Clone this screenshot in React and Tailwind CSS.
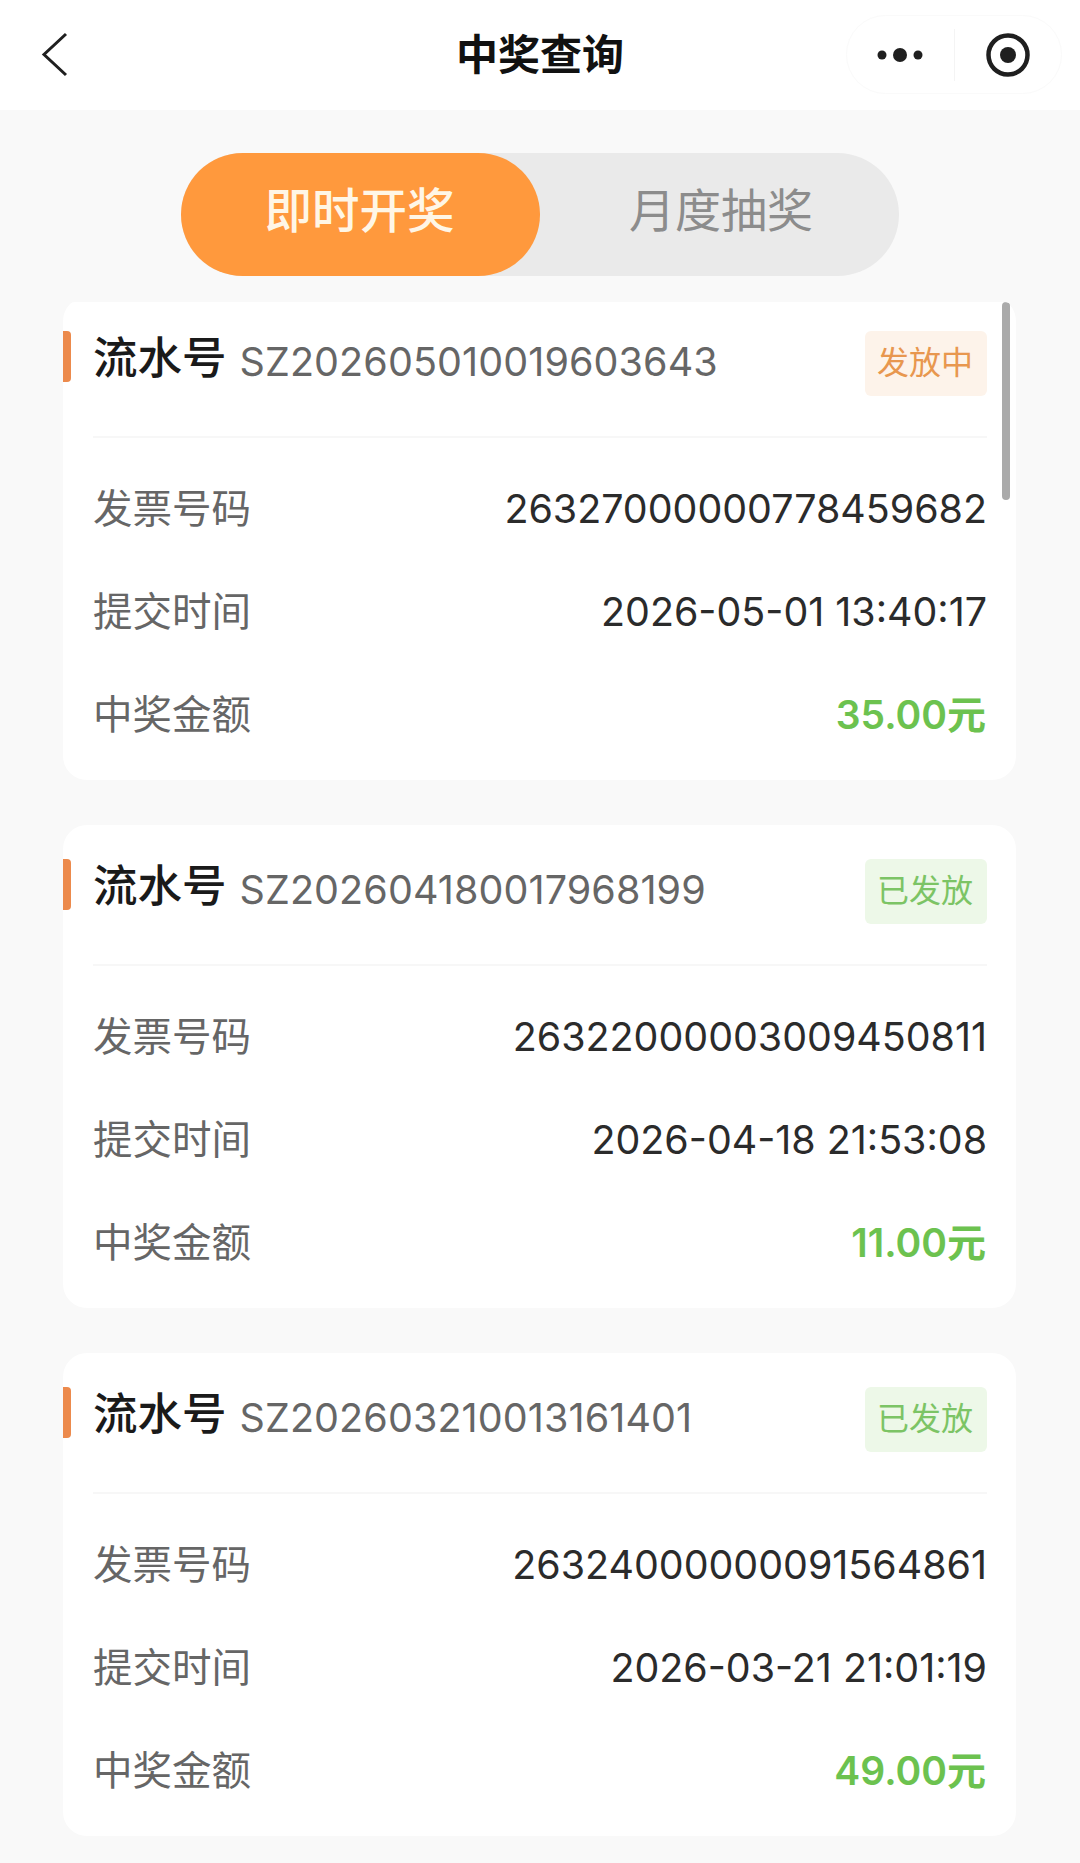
import React from "react";

const fontStack = "font-['Inter','Noto_Sans_CJK_SC',sans-serif]";

const records = [
  {
    serial: "SZ202605010019603643",
    status: "发放中",
    pending: true,
    invoice: "26327000000778459682",
    time: "2026-05-01 13:40:17",
    amount: "35.00元",
  },
  {
    serial: "SZ202604180017968199",
    status: "已发放",
    pending: false,
    invoice: "26322000003009450811",
    time: "2026-04-18 21:53:08",
    amount: "11.00元",
  },
  {
    serial: "SZ202603210013161401",
    status: "已发放",
    pending: false,
    invoice: "26324000000091564861",
    time: "2026-03-21 21:01:19",
    amount: "49.00元",
  },
];

const Row = ({ label, children }) => (
  <div className="flex h-[103px] items-center justify-between">
    <span className="text-[39.5px] leading-none text-[#666666]">{label}</span>
    {children}
  </div>
);

const RecordCard = ({ record }) => (
  <div className="relative h-[483px] rounded-[24px] bg-white pl-[30px] pr-[29px]">
    <div className="absolute left-0 top-[34px] h-[51px] w-[8px] rounded-r-[4px] bg-[#ec8a4c]" />
    <div className="flex h-[123px] items-center justify-between pt-[6px]">
      <div className="flex items-center">
        <span className="mb-[6px] text-[44.5px] font-medium leading-none text-[#1a1a1a]">流水号</span>
        <span className="ml-[13px] mt-[3px] text-[39.5px] leading-none tracking-[0.1px] text-[#666666]">
          {record.serial}
        </span>
      </div>
      <span
        className={
          record.pending
            ? "mt-[3px] flex h-[65px] w-[122px] items-center justify-center rounded-[6px] bg-[#fdf3ea] pr-[2px] text-[32px] text-[#e8974f]"
            : "mt-[3px] flex h-[65px] w-[122px] items-center justify-center rounded-[6px] bg-[#edf8e8] pr-[2px] text-[32px] text-[#7cc465]"
        }
      >
        {record.status}
      </span>
    </div>
    <div className="mt-[16px] h-[2px] bg-[#f7f7f7]" />
    <div className="pt-[20px]">
      <Row label="发票号码">
        <span className="text-[39.4px] leading-none text-[#2b2b2b]">{record.invoice}</span>
      </Row>
      <Row label="提交时间">
        <span className="text-[39.4px] leading-none text-[#2b2b2b]">{record.time}</span>
      </Row>
      <Row label="中奖金额">
        <span className="mb-[2px] mr-[1px] text-[39px] font-semibold leading-none text-[#6cc24f]">{record.amount}</span>
      </Row>
    </div>
  </div>
);

export default function App() {
  return (
    <div className={`h-[1863px] overflow-hidden bg-[#f9f9f9] ${fontStack}`}>
      <div className="relative flex h-[110px] items-center justify-center bg-white">
        <svg className="absolute left-[41px] top-[32px]" width="28" height="45" viewBox="0 0 28 45" fill="none">
          <path d="M25 2 3 22.5 25 43" stroke="#1f1f1f" strokeWidth="3" />
        </svg>
        <span className="text-[42px] font-semibold leading-none text-[#111111]">中奖查询</span>
        <div className="absolute left-[846px] top-[15px] flex h-[79px] w-[216px] items-center rounded-[40px] border border-[#fafafa] bg-white">
          <div className="flex flex-1 items-center justify-center">
            <svg width="48" height="20" viewBox="0 0 48 20" fill="#1f1f1f">
              <circle cx="6" cy="10" r="4.5" />
              <circle cx="24" cy="10" r="7" />
              <circle cx="42" cy="10" r="4.5" />
            </svg>
          </div>
          <div className="h-[52px] w-px bg-[#f4f4f4]" />
          <div className="flex flex-1 items-center justify-center">
            <svg width="44" height="44" viewBox="0 0 44 44" fill="none">
              <circle cx="22" cy="22" r="19.5" stroke="#1f1f1f" strokeWidth="4.5" />
              <circle cx="22" cy="22" r="8" fill="#1f1f1f" />
            </svg>
          </div>
        </div>
      </div>

      <div className="mx-auto mt-[43px] flex h-[123px] w-[718px] rounded-[62px] bg-[#eaeaea]">
        <div className="flex w-[359px] items-center justify-center rounded-[62px] bg-[#ff993d] pb-[7px] pr-[2px] text-[47.5px] font-medium leading-none text-[#fff6e6]">
          即时开奖
        </div>
        <div className="flex flex-1 items-center justify-center pb-[9px] pl-[3px] text-[46px] leading-none text-[#8c8c8c]">
          月度抽奖
        </div>
      </div>

      <div className="relative ml-[63px] mt-[26px] h-[1560px] w-[953px] overflow-hidden rounded-t-[12px]">
        <div className="-mt-[5px] flex flex-col gap-[45px]">
          {records.map((record) => (
            <RecordCard key={record.serial} record={record} />
          ))}
        </div>
        <div className="absolute left-[939px] top-0 h-[198px] w-[8px] rounded-[4px] bg-[#aaaaaa]" />
      </div>
    </div>
  );
}
